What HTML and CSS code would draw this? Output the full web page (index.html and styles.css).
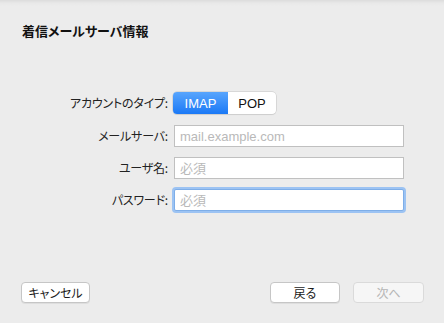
FILE: index.html
```html
<!DOCTYPE html>
<html lang="ja">
<head>
<meta charset="utf-8">
<link rel="stylesheet" href="styles.css">
</head>
<body>
<div class="sheet">
  <h1 class="title">着信メールサーバ情報</h1>
  <div class="form">
    <div class="row row-seg">
      <span class="label">アカウントのタイプ:</span>
      <div class="seg">
        <span class="seg-item seg-on">IMAP</span>
        <span class="seg-item">POP</span>
      </div>
    </div>
    <div class="row">
      <span class="label">メールサーバ:</span>
      <input class="field" type="text" placeholder="mail.example.com">
    </div>
    <div class="row">
      <span class="label">ユーザ名:</span>
      <input class="field" type="text" placeholder="必須">
    </div>
    <div class="row">
      <span class="label">パスワード:</span>
      <input class="field field-focus" type="password" placeholder="必須">
    </div>
  </div>
  <div class="footer">
    <button class="btn btn-cancel">キャンセル</button>
    <div class="footer-right">
      <button class="btn">戻る</button>
      <button class="btn btn-disabled">次へ</button>
    </div>
  </div>
</div>
</body>
</html>
```
FILE: styles.css
```css
html, body {
  margin: 0;
  padding: 0;
}
body {
  background: #ececec;
  font-family: "Liberation Sans", "Noto Sans CJK JP", sans-serif;
  color: #1a1a1a;
}
.sheet {
  width: 444px;
  height: 323px;
  box-sizing: border-box;
  display: flex;
  flex-direction: column;
  background: linear-gradient(#dcdcdc 0, #e8e8e8 3px, #ececec 6px);
}
.title {
  margin: 0;
  padding: 22px 0 0 22px;
  height: 18px;
  font-family: "Noto Sans CJK JP", sans-serif;
  font-size: 13px;
  font-weight: 700;
  line-height: 18px;
  color: #111;
  font-feature-settings: "palt";
}
.form {
  margin-top: 52px;
  display: flex;
  flex-direction: column;
  gap: 10px;
}
.row {
  display: grid;
  grid-template-columns: 168px 230px;
  column-gap: 6px;
  align-items: center;
  height: 22px;
}
.row-seg {
  margin-bottom: 1px;
}
.label {
  text-align: right;
  font-family: "Noto Sans CJK JP", sans-serif;
  font-size: 12px;
  line-height: 16px;
  color: #222;
  font-feature-settings: "palt";
  letter-spacing: -0.2px;
}
.seg {
  display: flex;
  width: 103px;
  height: 22px;
  box-sizing: border-box;
  margin-left: -1px;
  border-radius: 4px;
  background: #fff;
  box-shadow: 0 0 0 0.5px #c4c4c4, 0 1px 1px rgba(0,0,0,0.08);
  overflow: hidden;
}
.seg-item {
  flex: 1;
  display: flex;
  align-items: center;
  justify-content: center;
  font-size: 13px;
  color: #111;
}
.seg-on {
  flex: 0 0 55px;
  color: #fff;
  background: linear-gradient(#58a5fd, #1b79f6);
}
.field {
  width: 230px;
  height: 22px;
  box-sizing: border-box;
  margin: 0;
  border: 1px solid #c0c0c0;
  background: #fff;
  padding: 0 5px;
  font-family: "Liberation Sans", "Noto Sans CJK JP", sans-serif;
  font-size: 13px;
  outline: none;
}
.field::placeholder {
  color: #b9b9b9;
  font-family: "Liberation Sans", "Noto Sans CJK JP", sans-serif;
}
.field-focus {
  border-color: #7eaee8;
  box-shadow: 0 0 0 2px #9cc3f3;
  border-radius: 2px;
}
.footer {
  margin-top: auto;
  margin-bottom: 20px;
  display: flex;
  justify-content: space-between;
  padding: 0 20px 0 21px;
}
.footer-right {
  display: flex;
  gap: 13px;
}
.btn {
  width: 70px;
  height: 21px;
  box-sizing: border-box;
  padding: 0;
  border: 1px solid #c6c6c6;
  border-radius: 4px;
  background: #fff;
  box-shadow: 0 1px 0 rgba(0,0,0,0.06);
  font-family: "Noto Sans CJK JP", sans-serif;
  font-size: 12px;
  line-height: 18px;
  color: #1a1a1a;
  font-feature-settings: "palt";
}
.btn-cancel {
  width: 69px;
}
.btn-disabled {
  width: 71px;
  background: #f6f6f6;
  border-color: #dadada;
  color: #b5b5b5;
  box-shadow: none;
}
```
